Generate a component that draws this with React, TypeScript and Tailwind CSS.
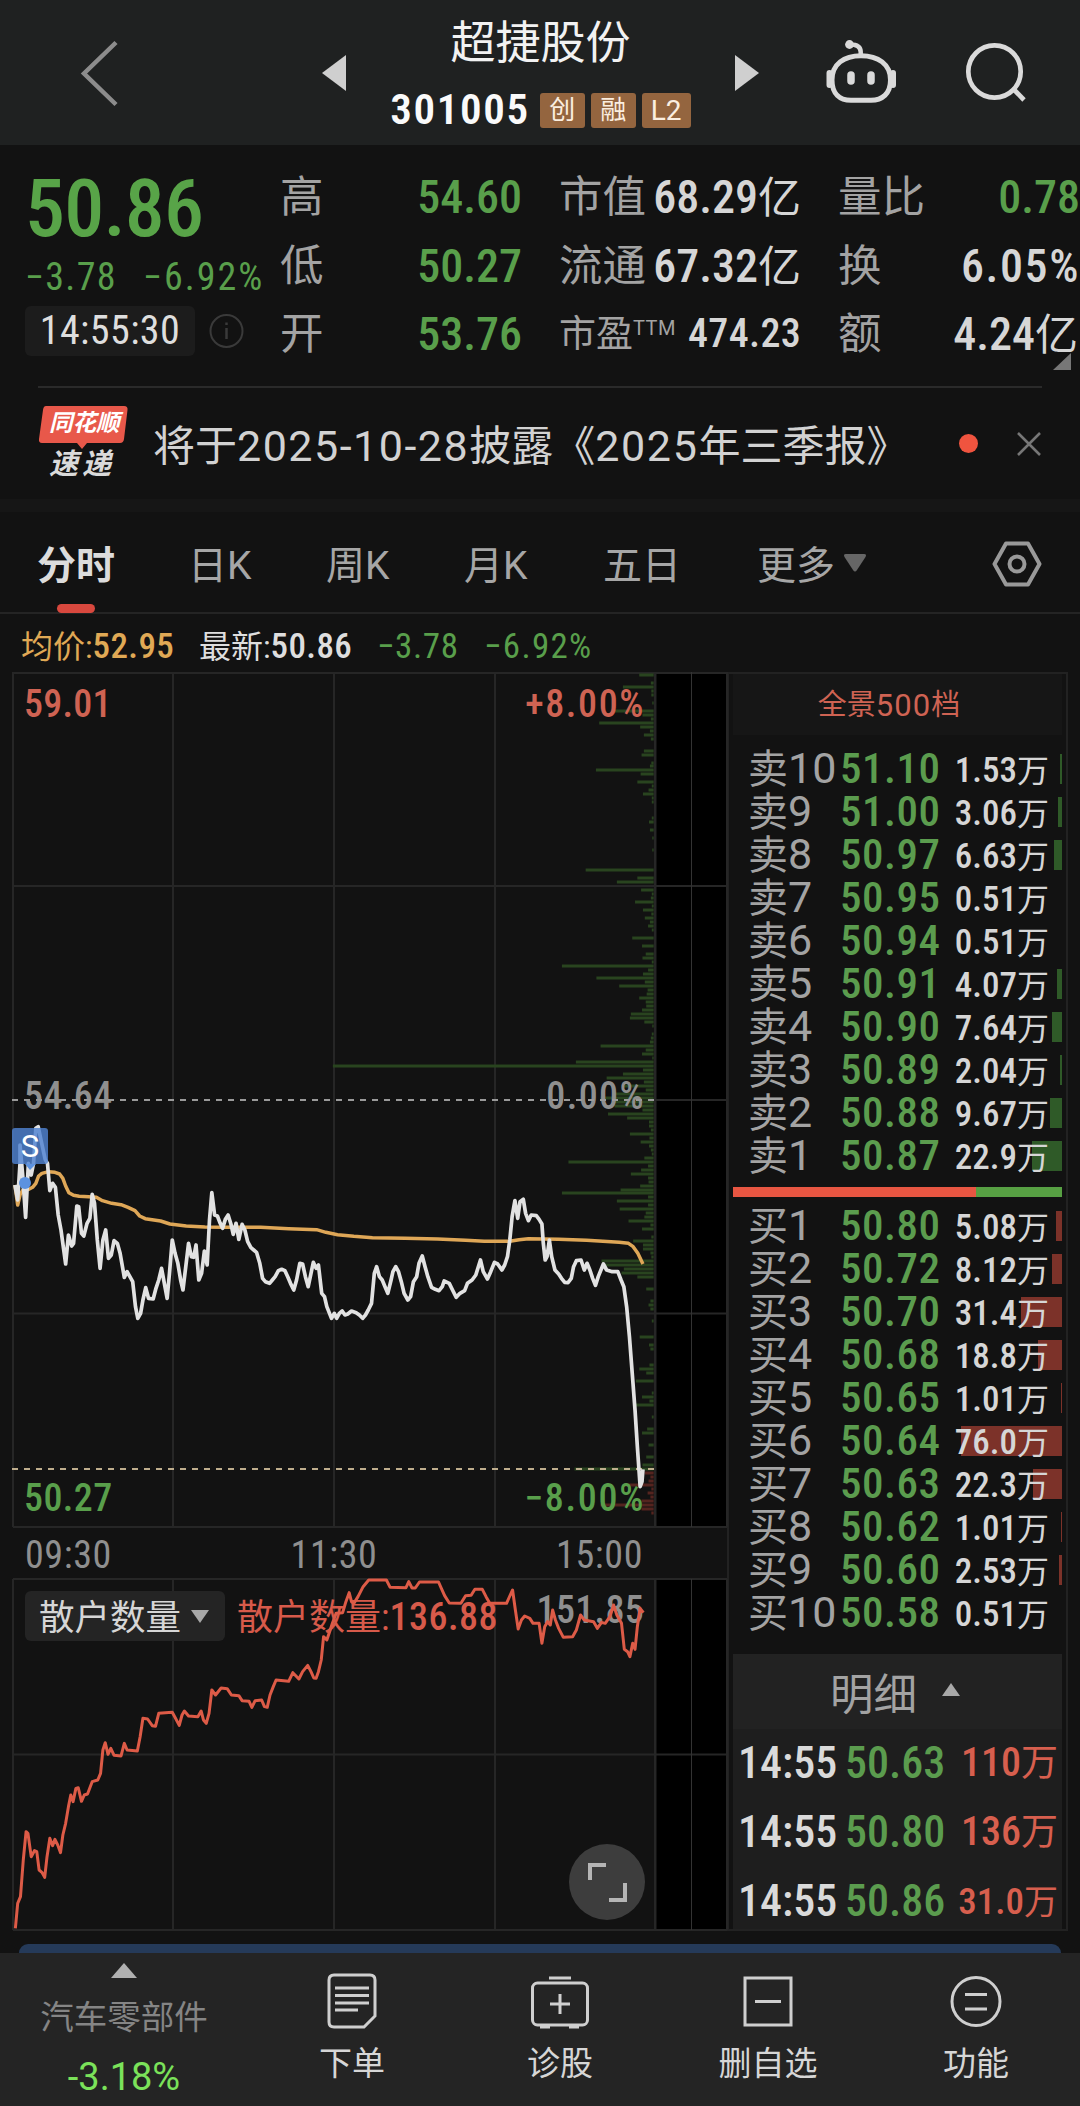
import React from 'react'

type TLevel = { label: string; price: string; volume: string; bar: number }

const sells: TLevel[] = [
  { label: '卖10', price: '51.10', volume: '1.53', bar: 2 },
  { label: '卖9', price: '51.00', volume: '3.06', bar: 4 },
  { label: '卖8', price: '50.97', volume: '6.63', bar: 8 },
  { label: '卖7', price: '50.95', volume: '0.51', bar: 0 },
  { label: '卖6', price: '50.94', volume: '0.51', bar: 0 },
  { label: '卖5', price: '50.91', volume: '4.07', bar: 5 },
  { label: '卖4', price: '50.90', volume: '7.64', bar: 10 },
  { label: '卖3', price: '50.89', volume: '2.04', bar: 2 },
  { label: '卖2', price: '50.88', volume: '9.67', bar: 12 },
  { label: '卖1', price: '50.87', volume: '22.9', bar: 30 },
]

const buys: TLevel[] = [
  { label: '买1', price: '50.80', volume: '5.08', bar: 6 },
  { label: '买2', price: '50.72', volume: '8.12', bar: 10 },
  { label: '买3', price: '50.70', volume: '31.4', bar: 41 },
  { label: '买4', price: '50.68', volume: '18.8', bar: 24 },
  { label: '买5', price: '50.65', volume: '1.01', bar: 1 },
  { label: '买6', price: '50.64', volume: '76.0', bar: 101 },
  { label: '买7', price: '50.63', volume: '22.3', bar: 29 },
  { label: '买8', price: '50.62', volume: '1.01', bar: 1 },
  { label: '买9', price: '50.60', volume: '2.53', bar: 3 },
  { label: '买10', price: '50.58', volume: '0.51', bar: 0 },
]

const trades = [
  { time: '14:55', price: '50.63', volume: '110', size: 'text-[40px]', unit: 'text-[37px]' },
  { time: '14:55', price: '50.80', volume: '136', size: 'text-[40px]', unit: 'text-[37px]' },
  { time: '14:55', price: '50.86', volume: '31.0', size: 'text-[37px]', unit: 'text-[34px]' },
]

// [y, left edge] of every price bucket, the bars all end at x = 1404
const upperBuckets = [
  [45, 1373], [69, 1398], [81, 1338], [93, 1399], [105, 1399], [129, 1401], [153, 1320], [165, 1380], [177, 1398],
  [189, 1287], [201, 1375], [213, 1396], [225, 1383], [237, 1398], [273, 1383], [285, 1378], [309, 1399], [318, 1396],
  [330, 1280], [342, 1376], [366, 1369], [378, 1400], [390, 1393], [402, 1381], [414, 1400], [426, 1400], [474, 1400],
  [486, 1394], [510, 1396], [534, 1401], [570, 1401], [630, 1258], [654, 1369], [666, 1325], [690, 1377], [702, 1400],
  [714, 1398], [726, 1364], [738, 1400], [750, 1381], [762, 1399], [774, 1385], [786, 1396], [798, 1392], [810, 1400],
  [834, 1358], [858, 1379], [882, 1387], [894, 1380], [906, 1400], [918, 1207], [930, 1392], [942, 1381], [954, 1281],
  [966, 1385], [978, 1330], [990, 1391], [1002, 1389], [1014, 1373], [1026, 1387], [1038, 1388], [1050, 1379],
  [1062, 1355], [1074, 1353], [1086, 1384], [1098, 1401], [1122, 1400], [1134, 1398], [1146, 1396], [1158, 1290],
  [1170, 1387], [1182, 1379], [1194, 1401], [1206, 1237], [1218, 715], [1230, 1381], [1242, 1338], [1254, 1303],
  [1266, 1383], [1278, 1340], [1290, 1387], [1302, 1320], [1314, 1290],
]

const lowerBuckets = [
  [6, 1318], [18, 1320], [30, 1380], [42, 1306], [54, 1347], [66, 1394], [78, 1394], [90, 1398], [102, 1353],
  [114, 1395], [126, 1376], [138, 1394], [150, 1398], [162, 1400], [174, 1384], [186, 1221], [198, 1392], [210, 1377],
  [222, 1355], [234, 1392], [246, 1393], [258, 1375], [270, 1333], [279, 1207], [291, 1392], [303, 1325], [315, 1392],
  [327, 1331], [339, 1387], [351, 1384], [363, 1350], [375, 1397], [387, 1379], [411, 1399], [423, 1360], [435, 1381],
  [447, 1381], [459, 1397], [471, 1399], [483, 1292], [495, 1295], [507, 1340], [519, 1335], [531, 1369], [567, 1388],
  [603, 1397], [615, 1393], [627, 1397], [663, 1400], [711, 1374], [735, 1394], [747, 1397], [795, 1395], [807, 1373],
  [819, 1388], [843, 1366], [879, 1400], [891, 1379], [903, 1395], [915, 1366], [951, 1400], [987, 1390], [999, 1379],
  [1035, 1393], [1071, 1388], [1095, 1380], [1107, 1234],
]

const redBuckets = [
  [1119, 1385], [1131, 1397], [1143, 1393], [1155, 1340], [1167, 1399], [1179, 1391], [1191, 1397], [1203, 1378],
  [1215, 1290], [1227, 1378], [1239, 1399],
]

const pricePoints =
  '32,255 38,300 43,190 43,135 49,230 55,352 61,190 67,225 72,190 77,85 82,80 88,120 97,178 102,190 107,272 113,250 119,262 125,345 131,390 141,492 147,405 154,438 158,430 165,318 169,320 175,400 180,408 187,370 193,355 198,283 203,310 209,420 215,505 221,420 227,390 233,475 239,465 245,422 252,430 258,460 267,532 273,515 279,530 285,545 291,620 296,655 302,640 307,600 313,563 319,595 329,597 335,565 341,540 347,505 353,550 359,595 364,520 370,420 376,460 382,490 388,540 393,570 399,500 405,430 411,470 416,472 421,435 427,540 433,520 439,453 445,495 450,360 455,278 461,345 467,348 473,370 478,385 484,358 490,345 496,372 501,403 507,370 513,418 520,373 526,390 532,425 539,443 545,450 551,457 558,490 564,535 570,545 579,550 585,540 591,530 598,512 605,508 612,512 618,530 624,550 631,570 637,540 644,490 650,492 656,530 662,560 668,520 673,487 679,505 684,495 691,580 697,590 702,620 712,655 718,640 723,655 729,640 735,633 741,645 747,642 755,633 765,638 772,645 779,655 785,645 791,630 798,610 804,520 809,500 815,530 821,540 827,560 833,580 840,540 844,515 850,500 856,515 862,545 868,580 876,600 882,590 888,545 895,530 900,490 907,468 913,500 919,530 927,562 935,568 943,572 950,560 954,543 965,550 972,570 980,592 988,580 998,572 1004,550 1014,540 1022,525 1032,480 1038,515 1047,537 1054,515 1062,487 1069,492 1078,510 1084,495 1090,470 1095,420 1100,350 1106,302 1112,355 1117,305 1124,298 1129,340 1135,362 1141,345 1152,347 1158,358 1164,372 1167,430 1171,480 1175,470 1180,420 1185,470 1192,510 1200,522 1206,535 1213,547 1220,548 1227,535 1232,500 1238,482 1248,480 1255,510 1261,490 1267,510 1273,535 1279,556 1285,530 1296,492 1303,510 1315,515 1327,515 1334,540 1340,560 1346,620 1352,710 1358,820 1364,930 1369,1040 1375,1160 1379,1145 1381,1108'

const averagePoints =
  '32,255 38,315 43,285 50,268 62,268 70,262 77,250 83,228 90,220 104,215 118,217 128,222 135,235 141,258 148,278 158,286 170,289 190,290 207,292 220,302 240,310 260,314 275,322 290,332 300,348 312,356 345,363 365,372 400,378 440,381 480,382 560,382 620,386 680,389 700,397 725,404 760,409 800,413 870,415 940,417 1000,421 1040,424 1095,424 1115,419 1135,416 1200,418 1260,421 1330,427 1350,430 1360,440 1370,460 1381,492'

const retailPoints =
  '33,1105 38,1030 44,1010 50,900 56,815 60,820 67,890 74,872 79,875 84,930 90,937 96,952 101,890 107,835 113,857 118,838 124,855 130,878 135,825 141,790 147,740 152,705 157,725 163,685 168,683 175,724 181,705 188,702 198,665 210,660 216,640 221,570 226,548 232,583 238,565 245,586 260,588 267,550 273,570 295,573 301,530 307,475 317,477 327,497 334,499 341,460 370,457 377,475 385,496 391,465 396,453 405,468 425,470 432,453 437,480 443,490 449,460 455,390 463,405 475,384 488,386 497,405 513,407 520,422 535,424 541,442 548,422 562,420 568,440 574,442 580,405 587,380 593,360 620,364 629,338 642,357 650,335 661,316 668,335 674,354 679,355 684,335 690,300 695,230 702,240 708,215 714,190 722,160 736,158 743,125 750,98 755,125 760,130 769,110 780,80 792,60 830,60 838,82 872,83 878,65 885,84 892,84 901,66 942,66 948,85 955,107 965,129 990,130 1000,107 1012,106 1020,88 1036,88 1044,110 1052,130 1088,130 1095,108 1101,90 1107,150 1113,207 1120,180 1127,168 1138,175 1145,190 1158,190 1164,250 1170,200 1176,185 1182,195 1187,150 1193,180 1200,205 1210,232 1230,230 1238,210 1247,165 1255,180 1275,185 1283,205 1292,187 1300,190 1310,170 1318,135 1325,165 1335,190 1341,268 1348,275 1353,290 1359,250 1364,268 1369,200 1375,145 1382,158'

const Header = () => (
  <div className="flex h-[145px] bg-[#1f2121]">
    <div className="w-[322px] pl-[79px] pt-[40px]">
      <svg width="42" height="67" viewBox="0 0 42 67" fill="none" stroke="#8c8c8c" strokeWidth="4.5">
        <path d="M37 2.500L5 33.500L37 64.500" />
      </svg>
    </div>
    <div className="w-[24px] pt-[55px]">
      <svg width="24" height="36" viewBox="0 0 24 36" fill="#cfcfcf"><path d="M24 0V36L0 18z" /></svg>
    </div>
    <div className="flex w-[389px] flex-col items-center pt-[21px]">
      <div className="h-[44px] text-[45px] leading-none text-[#f2f2f2]">超捷股份</div>
      <div className="mt-[26px] flex items-center gap-[6px]">
        <span className="mr-[4px] h-[38px] text-[43px] font-semibold leading-[36px] tracking-[1.6px] text-[#fafafa] [font-stretch:75%]">301005</span>
        <span className="h-[35px] w-[45px] rounded-[3px] bg-[#94653f] text-center text-[26px] leading-[34px] text-[#fbeee0]">创</span>
        <span className="h-[35px] w-[45px] rounded-[3px] bg-[#94653f] text-center text-[26px] leading-[34px] text-[#fbeee0]">融</span>
        <span className="h-[35px] w-[49px] rounded-[3px] bg-[#94653f] text-center text-[28px] leading-[36px] text-[#fbeee0]">L2</span>
      </div>
    </div>
    <div className="w-[24px] pt-[55px]">
      <svg width="24" height="36" viewBox="0 0 24 36" fill="#cfcfcf"><path d="M0 0V36L24 18z" /></svg>
    </div>
    <div className="flex gap-[68px] pl-[65px] pt-[39px]">
      <svg width="72" height="66" viewBox="0 0 72 66" fill="none" stroke="#dadada" strokeWidth="5">
        <path d="M37 16.700C54 16.700 66.500 25 66.500 41C66.500 55 58 61.300 47 61.300H27C16 61.300 8 55 8 41C8 25 20 16.700 37 16.700z" />
        <path d="M36.700 16V13C36.700 8 33 5.500 26 5.500" strokeWidth="4.500" />
        <circle cx="25.500" cy="5.500" r="4.400" fill="#dadada" stroke="none" />
        <path d="M5.500 34V46M69 34V46" strokeWidth="6" strokeLinecap="round" />
        <path d="M27 36V42M47 36V42" strokeWidth="7.500" strokeLinecap="round" />
      </svg>
      <svg width="64" height="66" viewBox="0 0 64 66" fill="none" stroke="#dadada" strokeWidth="4.700">
        <circle cx="30.500" cy="32.500" r="26.200" />
        <path d="M48.500 49L60 61" />
      </svg>
    </div>
  </div>
)

const Cell = ({ label, value, unit, valueClass }: { label: string; value: string; unit?: string; valueClass?: string }) => (
  <div className="flex h-[68.5px] items-center justify-between whitespace-nowrap">
    <span className="pt-[1px] text-[43.5px] text-[#a3a3a3]">{label}</span>
    <span className={'font-medium [font-stretch:75%] ' + (valueClass || 'text-[46px] text-[#d6d6d6]')}>
      {value}{unit && <span className="text-[43px] font-normal">{unit}</span>}
    </span>
  </div>
)

const Quote = () => (
  <div className="relative flex h-[241px] pt-[18px] leading-none">
    <div className="w-[280px] pl-[25px]">
      <div className="flex h-[90px] items-center pt-[1px] text-[80px] font-medium tracking-[-0.8px] text-[#58a448] [font-stretch:75%]">50.86</div>
      <div className="flex h-[46px] items-center whitespace-nowrap pt-[1px] text-[38px] text-[#599f4b] [font-stretch:75%]">
        <span className="w-[118px] tracking-[1.3px]">−3.78</span>
        <span className="tracking-[2px]">−6.92%</span>
      </div>
      <div className="mt-[7px] flex items-center gap-[14px]">
        <span className="flex h-[50px] w-[170px] items-center justify-center rounded-[6px] bg-[#1c1c1c] text-[40px] tracking-[0.4px] text-[#dedede] [font-stretch:75%]">14:55:30</span>
        <svg width="35" height="36" viewBox="0 0 35 36" fill="none" stroke="#3a3a3a" strokeWidth="2">
          <circle cx="17.500" cy="18" r="16" />
          <path d="M17.500 15V26M17.500 9.500V12" strokeWidth="2.500" />
        </svg>
      </div>
    </div>
    <div className="w-[242px]">
      <Cell label="高" value="54.60" valueClass="text-[46px] text-[#599f4b]" />
      <Cell label="低" value="50.27" valueClass="text-[46px] text-[#599f4b]" />
      <Cell label="开" value="53.76" valueClass="text-[46px] text-[#599f4b]" />
    </div>
    <div className="ml-[37px] w-[242px]">
      <Cell label="市值" value="68.29" unit="亿" />
      <Cell label="流通" value="67.32" unit="亿" />
      <div className="flex h-[68.5px] items-center justify-between whitespace-nowrap">
        <span className="flex items-start text-[37px] text-[#a3a3a3]">市盈<span className="mt-[2px] text-[20px] tracking-[0.5px]">TTM</span></span>
        <span className="text-[40px] font-medium tracking-[0.3px] text-[#d6d6d6] [font-stretch:75%]">474.23</span>
      </div>
    </div>
    <div className="ml-[37px] w-[242px]">
      <Cell label="量比" value="0.78" valueClass="text-[46px] text-[#599f4b]" />
      <Cell label="换" value="6.05%" valueClass="text-[46px] tracking-[1.6px] text-[#d6d6d6]" />
      <Cell label="额" value="4.24" unit="亿" valueClass="pr-[2px] text-[46px] text-[#d6d6d6]" />
    </div>
    <svg className="absolute right-[9px] top-[208px]" width="18" height="17" viewBox="0 0 18 17" fill="#777"><path d="M18 0V17H0z" /></svg>
  </div>
)

const News = () => (
  <div className="h-[113px] px-[38px]">
    <div className="flex h-full items-start border-t-2 border-[#2a2a2a] leading-none">
      <div className="relative mt-[18px] w-[90px]">
        <svg width="90" height="44" viewBox="0 0 90 44" fill="#e8584a"><path d="M8 0H86Q90 0 89.500 4L86 33Q85.500 37 82 37H49L44 43L39 37H4Q0.500 37 1 33L5 4Q5.500 0 8 0z" /></svg>
        <div className="absolute left-[11px] top-[6px] whitespace-nowrap text-[23.5px] font-bold italic text-white">同花顺</div>
        <div className="whitespace-nowrap pl-[11px] text-[29px] font-bold italic tracking-[4px] text-[#dadada]">速递</div>
      </div>
      <div className="ml-[25px] mt-[37px] w-[741px] whitespace-nowrap text-[42px] text-[#d2d2d2]">
        将于<span className="text-[43px] tracking-[1.5px]">2025-10-28</span>披露《<span className="text-[43px] tracking-[1.7px]">2025</span>年三季报》
      </div>
      <div className="ml-[65px] mt-[46px] h-[19px] w-[19px] rounded-full bg-[#f0543f]" />
      <svg className="ml-[39px] mt-[44px]" width="24" height="24" viewBox="0 0 24 24" stroke="#777" strokeWidth="2.500"><path d="M1 1L23 23M23 1L1 23" /></svg>
    </div>
  </div>
)

const Tabs = () => (
  <div className="relative h-[102px] border-b-2 border-[#242424]">
    <div className="flex h-[106px] items-center pl-[37px] pt-[2px] text-[39px] leading-none text-[#a6a6a6]">
      <span className="w-[151px] font-bold text-[#dcdcdc]">分时</span>
      <span className="w-[138px]">日K</span>
      <span className="w-[138px]">周K</span>
      <span className="w-[139px]">月K</span>
      <span className="w-[154px]">五日</span>
      <span className="w-[86px]">更多</span>
      <svg className="mb-[6px]" width="24" height="18" viewBox="0 0 24 18" fill="#666"><path d="M3 0H21Q24 0 22.500 3L14 16Q12 19 10 16L1.500 3Q0 0 3 0z" /></svg>
      <svg className="mb-[5px] ml-[125px]" width="50" height="46" viewBox="0 0 50 46" fill="none" stroke="#999" strokeWidth="4">
        <path d="M14 2.500H36L47.500 23L36 43.500H14L2.500 23z" strokeLinejoin="round" />
        <circle cx="25" cy="23" r="7.500" />
      </svg>
    </div>
    <div className="absolute left-[57px] top-[92px] h-[9px] w-[38px] rounded-[5px] bg-[#d8483e]" />
  </div>
)

const Summary = () => (
  <div className="flex h-[58px] items-center whitespace-nowrap pb-[1px] pl-[21px] pt-[7px] text-[35px] leading-none [font-stretch:75%]">
    <span className="w-[178px] text-[#e0a955]"><span className="text-[32px]">均价:</span><span className="font-medium tracking-[0.4px]">52.95</span></span>
    <span className="w-[178px] text-[#dedede]"><span className="text-[32px]">最新:</span><span className="font-medium tracking-[0.4px]">50.86</span></span>
    <span className="w-[107px] tracking-[0.6px] text-[#599f4b]">−3.78</span>
    <span className="tracking-[1.3px] text-[#599f4b]">−6.92%</span>
  </div>
)

const Buckets = ({ rows, fill }: { rows: number[][]; fill: string }) => (
  <>
    {rows.map(([y, x]) => (
      <rect key={y} x={x} y={y - 4.5} width={1404 - x} height="9" fill={fill} />
    ))}
  </>
)

const PriceChart = () => (
  <div className="relative h-[857px] w-[727px] text-[38px] leading-none [font-stretch:75%]">
    <svg className="block" width="728" height="857" viewBox="0 12 728 857" fill="none">
      <rect x="657" y="12" width="70" height="855" fill="#000" />
      <path d="M13 13H727M13 226H727M656 440H727M13 653.500H727M13 867H727M13 12V867M173 12V867M334 12V867M495 12V867M655 12V867M727 12V867" stroke="#262626" strokeWidth="2" />
      <path d="M691.500 12V867" stroke="#333" />
      <g transform="scale(.46556 .33333)">
        <Buckets rows={upperBuckets} fill="#29441f" />
        <g transform="translate(0 1320)">
          <Buckets rows={lowerBuckets} fill="#29441f" />
          <Buckets rows={redBuckets} fill="#55241f" />
        </g>
      </g>
    </svg>
    <div className="absolute left-[24px] top-[13px] font-medium tracking-[0.2px] text-[#cf6353]">59.01</div>
    <div className="absolute right-[82px] top-[13px] font-medium tracking-[1.6px] text-[#cf6353]">+8.00%</div>
    <div className="absolute left-[24px] top-[405px] font-medium tracking-[0.4px] text-[#8f8f8f]">54.64</div>
    <div className="absolute right-[82px] top-[405px] font-medium tracking-[1.4px] text-[#8f8f8f]">0.00%</div>
    <div className="absolute left-[24px] top-[807px] font-medium tracking-[0.4px] text-[#599f4b]">50.27</div>
    <div className="absolute right-[82px] top-[807px] font-medium tracking-[1.7px] text-[#599f4b]">−8.00%</div>
    <svg className="absolute left-0 top-0" width="728" height="857" viewBox="0 12 728 857" fill="none">
      <path d="M12 440H655" stroke="#9a9a9a" strokeWidth="2" strokeDasharray="6 6" />
      <path d="M12 809H655" stroke="#bfae8d" strokeWidth="2" strokeDasharray="6 6" />
      <g transform="scale(.46556 .33333) translate(0 1320)" strokeLinejoin="round">
        <polyline points={averagePoints} stroke="#dfa757" strokeWidth="3.5" vectorEffect="non-scaling-stroke" />
        <polyline points={pricePoints} stroke="#e2e2e2" strokeWidth="3.7" vectorEffect="non-scaling-stroke" />
      </g>
      <rect x="12" y="468" width="36" height="36" rx="3" fill="#4f83d2" fillOpacity=".82" />
      <circle cx="25" cy="523" r="6" fill="#5c92e0" />
      <path d="M25 504H36L30 510z" fill="#5c92e0" />
    </svg>
    <div className="absolute left-[12px] top-[456px] flex h-[36px] w-[36px] items-center justify-center text-[31px] text-white [font-stretch:100%]">S</div>
  </div>
)

const RetailChart = () => (
  <div className="relative h-[353px] w-[727px] leading-none">
    <svg className="block" width="728" height="353" viewBox="0 18 728 353" fill="none">
      <rect x="657" y="19" width="70" height="351" fill="#000" />
      <path d="M13 19H727M13 194.500H727M13 370H727M13 19V370M173 19V370M334 19V370M495 19V370M655 19V370M727 19V370" stroke="#262626" strokeWidth="2" />
      <path d="M691.500 19V370" stroke="#333" />
    </svg>
    <div className="absolute left-[25px] top-[13px] flex h-[50px] w-[200px] items-center gap-[10px] rounded-[6px] bg-[#242424] pl-[14px]">
      <span className="pt-[5px] text-[35.5px] text-[#d6d6d6]">散户数量</span>
      <svg width="18" height="13" viewBox="0 0 18 13" fill="#a8a8a8"><path d="M0 0H18L9 13z" /></svg>
    </div>
    <div className="absolute left-[237px] top-[20px] whitespace-nowrap text-[38px] text-[#d75a4a] [font-stretch:75%]">
      <span className="text-[36px]">散户数量:</span><span className="font-medium tracking-[0.5px]">136.88</span>
    </div>
    <div className="absolute right-[83px] top-[13px] text-[38px] font-medium tracking-[0.3px] text-[#8f8f8f] [font-stretch:75%]">151.85</div>
    <svg className="absolute left-0 top-0" width="728" height="353" viewBox="0 18 728 353" fill="none">
      <g transform="scale(.46556 .33333)">
        <polyline points={retailPoints} stroke="#dd5b47" strokeWidth="3" strokeLinejoin="round" vectorEffect="non-scaling-stroke" />
      </g>
      <circle cx="607" cy="322" r="38" fill="#3d3d3d" />
      <path d="M590 320V305H606M609 340H625V323" stroke="#b5b5b5" strokeWidth="4" />
    </svg>
  </div>
)

const LevelRow = ({ level, color }: { level: TLevel; color: string }) => (
  <div className="relative flex h-[43px] items-center whitespace-nowrap leading-none">
    <div className={'absolute right-0 top-[7px] h-[30px] ' + color} style={{ width: level.bar }} />
    <span className="w-[107px] pl-[15px] text-[#a3a3a3]">
      <span className="text-[40px]">{level.label[0]}</span>
      <span className="text-[43px]">{level.label.slice(1)}</span>
    </span>
    <span className="w-[100px] pb-[1px] text-[43px] font-medium tracking-[0.5px] text-[#5b9c4e] [font-stretch:75%]">{level.price}</span>
    <span className="relative ml-auto mr-[13px] pt-[3px] text-[35px] font-medium text-[#d6d6d6] [font-stretch:75%]">{level.volume}<span className="text-[32px] font-normal">万</span></span>
  </div>
)

const OrderBook = () => (
  <div className="h-[1259px] w-[341px] border-2 border-[#222] px-[4px]">
    <div className="flex h-[61px] items-center justify-center bg-[#161616] pr-[17px] pt-[2px] text-[29px] leading-none text-[#cf6353]">
      全景<span className="text-[31px] tracking-[1px]">500</span>档
    </div>
    <div className="mt-[12px]">
      {sells.map((level) => (
        <LevelRow key={level.label} level={level} color="bg-[#2f5a28]" />
      ))}
    </div>
    <div className="mb-[7px] mt-[10px] flex h-[10px]">
      <div className="w-[243px] bg-[#e85642]" />
      <div className="flex-1 bg-[#57a043]" />
    </div>
    {buys.map((level) => (
      <LevelRow key={level.label} level={level} color="bg-[#7c3229]" />
    ))}
    <div className="mt-[20px] h-[275px] bg-[#1e1e1e] leading-none">
      <div className="flex h-[75px] items-center bg-[#222] pl-[97px] pt-[8px]">
        <span className="text-[43.5px] text-[#a3a3a3]">明细</span>
        <svg className="mb-[13px] ml-[25px]" width="18" height="13" viewBox="0 0 18 13" fill="#a8a8a8"><path d="M0 13H18L9 0z" /></svg>
      </div>
      {trades.map((trade) => (
        <div key={trade.price} className="flex h-[69px] items-center whitespace-nowrap pb-[1px] pl-[5px] pr-[4px] font-medium [font-stretch:75%]">
          <span className="w-[107px] text-[44px] text-[#dadada]">{trade.time}</span>
          <span className="text-[44px] text-[#5b9c4e]">{trade.price}</span>
          <span className={'ml-auto text-[#d75f4e] ' + trade.size}>{trade.volume}<span className={'font-normal ' + trade.unit}>万</span></span>
        </div>
      ))}
    </div>
  </div>
)

const BottomNav = () => (
  <div className="flex h-[153px] bg-[#242424] text-[33px] leading-none text-[#d6d6d6]">
    <div className="flex w-[248px] flex-col items-center pt-[10px]">
      <svg width="26" height="15" viewBox="0 0 26 15" fill="#b0b0b0"><path d="M0 15H26L13 0z" /></svg>
      <span className="mt-[23px] text-[33.5px] text-[#858585]">汽车零部件</span>
      <span className="mt-[23px] text-[38px] text-[#7be25a]">-3.18%</span>
    </div>
    <div className="flex w-[208px] flex-col items-center pt-[20px]">
      <svg width="50" height="56" viewBox="0 0 50 56" fill="none" stroke="#cfcfcf" strokeWidth="3">
        <path d="M7 2H43Q48 2 48 7V43L37 54H7Q2 54 2 49V7Q2 2 7 2z" />
        <path d="M8 15H42M8 22.500H42M8 30H42M8 37H31" />
      </svg>
      <span className="mt-[18px]">下单</span>
    </div>
    <div className="flex w-[208px] flex-col items-center pt-[20px]">
      <svg width="58" height="56" viewBox="0 0 58 56" fill="none" stroke="#cfcfcf" strokeWidth="3">
        <rect x="1.500" y="10" width="55" height="42" rx="5" />
        <path d="M18 5H40M29 21V41M19 31H39" />
        <path d="M9 53.500H19M38 53.500H48" strokeWidth="4" />
      </svg>
      <span className="mt-[18px]">诊股</span>
    </div>
    <div className="flex w-[208px] flex-col items-center pt-[20px]">
      <svg width="50" height="56" viewBox="0 0 50 56" fill="none" stroke="#cfcfcf" strokeWidth="3">
        <path d="M2 5H48V52H2zM12 28.500H38" />
      </svg>
      <span className="mt-[18px]">删自选</span>
    </div>
    <div className="flex w-[208px] flex-col items-center pt-[20px]">
      <svg width="52" height="56" viewBox="0 0 52 56" fill="none" stroke="#cfcfcf" strokeWidth="3">
        <circle cx="26" cy="28.500" r="24" />
        <path d="M15 21.500H37M15 36H37" />
      </svg>
      <span className="mt-[18px]">功能</span>
    </div>
  </div>
)

const App = () => {
  return (
    <div className="h-[2106px] w-[1080px] overflow-hidden bg-[#121212] font-['Roboto','Noto_Sans_CJK_SC',sans-serif]">
      <Header />
      <Quote />
      <News />
      <div className="h-[13px] bg-[#161616]" />
      <Tabs />
      <Summary />
      <div className="flex h-[1272px]">
        <div className="w-[727px]">
          <PriceChart />
          <div className="flex h-[49px] items-center justify-between pl-[25px] pr-[84px] pt-[2px] text-[38px] leading-none tracking-[0.6px] text-[#8f8f8f] [font-stretch:75%]">
            <span>09:30</span>
            <span>11:30</span>
            <span>15:00</span>
          </div>
          <RetailChart />
        </div>
        <OrderBook />
      </div>
      <div className="mx-[19px] h-[9px] rounded-t-[18px] bg-[#253a59]" />
      <BottomNav />
    </div>
  )
}

export default App
